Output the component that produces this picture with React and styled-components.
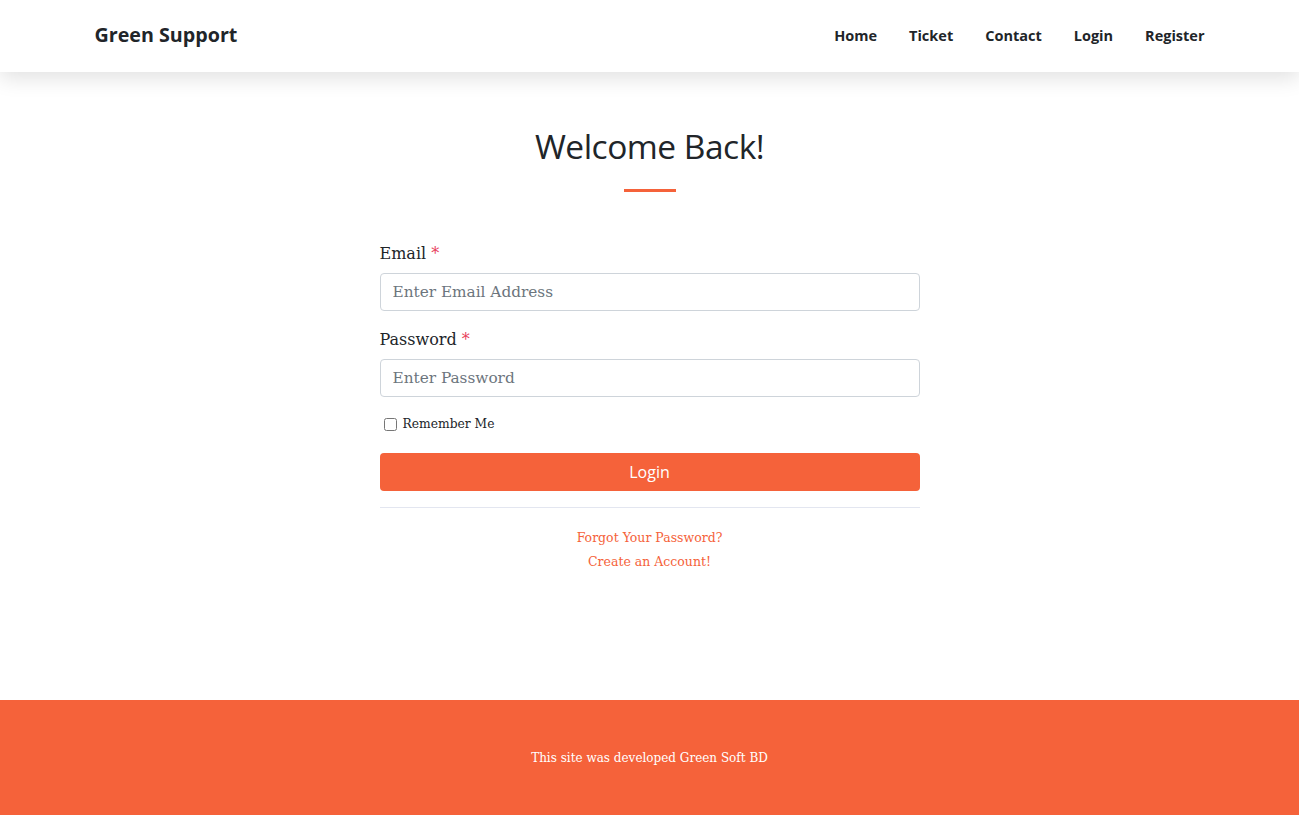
import React from 'react'
import styled, { createGlobalStyle } from 'styled-components';

const GlobalStyle = createGlobalStyle`
    body{
        margin: 0;
        background: #fff;
        color: #212529;
        font-family: 'DejaVu Serif', 'Liberation Serif', serif;
    }
    *{ box-sizing: border-box; }
`;

const Page = styled.div`
    min-height: 815px;
    display: flex;
    flex-direction: column;
`;

const Header = styled.header`
    height: 72px;
    background: #fff;
    box-shadow: 0 6px 20px rgba(0,0,0,0.12);
    position: relative;
    z-index: 1;
`;

const Container = styled.div`
    max-width: 1140px;
    margin: 0 auto;
    padding: 0 15px;
    height: 100%;
    display: flex;
    align-items: center;
    justify-content: space-between;
`;

const Brand = styled.a`
    font-family: 'Open Sans', sans-serif;
    font-weight: 700;
    font-size: 19.7px;
    color: #212529;
    text-decoration: none;
    margin-bottom: 3px;
`;

const Nav = styled.nav`
    display: flex;
    gap: 32px;
    margin-bottom: 1px;
    a{
        font-family: 'Open Sans', sans-serif;
        font-weight: 700;
        font-size: 14.5px;
        color: #212529;
        text-decoration: none;
    }
`;

const Main = styled.main`
    flex: 1;
    display: flex;
    flex-direction: column;
    align-items: center;
    padding-top: 50px;
`;

const Title = styled.h1`
    margin: 0;
    font-family: 'Open Sans', sans-serif;
    font-weight: 500;
    font-size: 33.5px;
    letter-spacing: -0.5px;
    line-height: 48px;
    color: #212529;
`;

const Divider = styled.div`
    width: 52px;
    height: 3px;
    background: #f5623a;
    margin: 19px 0 50px;
`;

const Form = styled.form`
    width: 540px;
`;

const Field = styled.div`
    margin-bottom: 17px;
`;

const Label = styled.label`
    display: block;
    font-size: 16px;
    line-height: 24px;
    margin-bottom: 7px;
    span{ color: #e83e5c; }
`;

const Input = styled.input`
    width: 100%;
    height: 38px;
    padding: 0 12px;
    border: 1px solid #ced4da;
    border-radius: 4px;
    font-family: 'DejaVu Serif', serif;
    font-size: 15.3px;
    color: #495057;
    &::placeholder{ color: #6c757d; }
`;

const Check = styled.label`
    display: flex;
    align-items: center;
    gap: 6px;
    font-size: 12.3px;
    padding-left: 4px;
    margin: 19px 0 22px;
    input{ margin: 2px 0 0; width: 13px; height: 13px; }
`;

const Button = styled.button`
    width: 100%;
    height: 38px;
    border: none;
    border-radius: 4px;
    background: #f5623a;
    color: #fff;
    font-family: 'Open Sans', sans-serif;
    font-size: 16px;
    font-weight: 500;
`;

const Rule = styled.hr`
    border: 0;
    border-top: 1px solid #e3e6f0;
    margin: 16px 0 21px;
`;

const Links = styled.div`
    display: flex;
    flex-direction: column;
    align-items: center;
    gap: 6px;
    a{
        font-size: 12.5px;
        line-height: 18px;
        color: #f5623a;
        text-decoration: none;
    }
`;

const Footer = styled.footer`
    height: 115px;
    background: #f5623a;
    display: flex;
    align-items: center;
    justify-content: center;
    color: #fff;
    font-size: 12px;
`;

export default function App() {
    return(
        <Page>
            <GlobalStyle />
            <Header>
                <Container>
                    <Brand href="#">Green Support</Brand>
                    <Nav>
                        <a href="#">Home</a>
                        <a href="#">Ticket</a>
                        <a href="#">Contact</a>
                        <a href="#">Login</a>
                        <a href="#">Register</a>
                    </Nav>
                </Container>
            </Header>
            <Main>
                <Title>Welcome Back!</Title>
                <Divider />
                <Form onSubmit={e => e.preventDefault()}>
                    <Field>
                        <Label>Email <span>*</span></Label>
                        <Input type="email" placeholder="Enter Email Address" />
                    </Field>
                    <Field>
                        <Label>Password <span>*</span></Label>
                        <Input type="password" placeholder="Enter Password" />
                    </Field>
                    <Check><input type="checkbox" /> Remember Me</Check>
                    <Button type="submit">Login</Button>
                    <Rule />
                    <Links>
                        <a href="#">Forgot Your Password?</a>
                        <a href="#">Create an Account!</a>
                    </Links>
                </Form>
            </Main>
            <Footer>This site was developed Green Soft BD</Footer>
        </Page>
    )
}
